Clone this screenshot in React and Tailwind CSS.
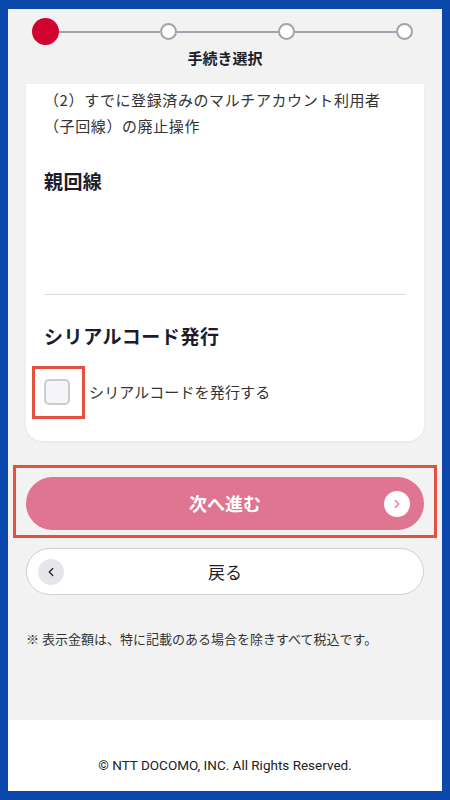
import { ChevronLeft, ChevronRight } from "lucide-react";

const jp = "font-['Noto_Sans_CJK_JP','Noto_Sans',sans-serif]";

function Steps() {
  return (
    <div className="pt-[9px]">
      <div className="ml-[24px] mr-[29px] flex items-center">
        <span className="h-[27px] w-[27px] shrink-0 rounded-full bg-[#d0022f]" />
        <span className="h-[2px] flex-1 bg-[#a3a3ad]" />
        <span className="h-[17px] w-[17px] shrink-0 rounded-full border-2 border-[#a3a3ad] bg-white" />
        <span className="h-[2px] flex-1 bg-[#a3a3ad]" />
        <span className="h-[17px] w-[17px] shrink-0 rounded-full border-2 border-[#a3a3ad] bg-white" />
        <span className="h-[2px] flex-1 bg-[#a3a3ad]" />
        <span className="h-[17px] w-[17px] shrink-0 rounded-full border-2 border-[#a3a3ad] bg-white" />
      </div>
      <p className="mt-[3px] text-center text-[15px] font-bold leading-[20px] text-[#1c1c2b]">手続き選択</p>
    </div>
  );
}

export default function App() {
  return (
    <div className={`h-[800px] overflow-hidden bg-[#0a48ac] px-[8px] pt-[9px] ${jp}`}>
      <div className="flex h-[782px] flex-col bg-[#f2f2f2]">
        <Steps />

        <main className="flex-1 px-[18px] pt-[16px]">
          <section className="rounded-b-[16px] bg-white px-[18px] pb-[22px] pt-[3px] shadow-[0_1px_3px_rgba(0,0,0,0.06)]">
            <p className="text-[15px] leading-[26px] tracking-[0.04em] text-[#333]">
              （2）すでに登録済みのマルチアカウント利用者
              <br />
              （子回線）の廃止操作
            </p>

            <h2 className="mt-[28px] text-[19px] font-bold leading-[28px] tracking-[0.02em] text-[#1c1c2b]">親回線</h2>

            <div className="mt-[99px] h-px bg-[#dcdcdc]" />

            <h2 className="mt-[27px] text-[19px] font-bold leading-[28px] tracking-[0.03em] text-[#1c1c2b]">シリアルコード発行</h2>

            <label className="mt-[16px] flex items-center">
              <span className="-ml-[12px] border-[3px] border-[#e4513f] pb-[11px] pl-[9px] pr-[12px] pt-[10px]">
                <span className="block h-[26px] w-[26px] rounded-[5px] border-2 border-[#cbcbd1] bg-[#f5f5f7]" />
              </span>
              <span className="ml-[4px] text-[15px] tracking-[0.01em] text-[#333]">シリアルコードを発行する</span>
            </label>
          </section>

          <div className="-mx-[13px] mt-[24px] border-[3px] border-[#e4513f] px-[10px] pb-[5px] pt-[9px]">
            <button type="button" className="relative flex h-[53px] w-full items-center justify-center rounded-full bg-[#df7591] text-[18px] font-bold text-white">
              次へ進む
              <span className="absolute right-[14px] top-1/2 flex h-[26px] w-[26px] -translate-y-1/2 items-center justify-center rounded-full bg-white text-[#df7591]">
                <ChevronRight size={14} strokeWidth={2} />
              </span>
            </button>
          </div>

          <button type="button" className="relative mt-[10px] flex h-[47px] w-full items-center justify-center rounded-full border border-[#cfcfd3] bg-white text-[17px] text-[#222]">
            <span className="absolute left-[11px] top-1/2 flex h-[26px] w-[26px] -translate-y-1/2 items-center justify-center rounded-full bg-[#e6e6ea] text-[#222]">
              <ChevronLeft size={14} strokeWidth={2.2} />
            </span>
            戻る
          </button>

          <p className="mt-[34px] text-[13px] leading-[20px] text-[#333]">※ 表示金額は、特に記載のある場合を除きすべて税込です。</p>
        </main>

        <footer className="h-[71px] bg-white pt-[35px] text-center font-['Roboto','Noto_Sans',sans-serif] text-[13.5px] leading-[20px] text-[#222]">
          © NTT DOCOMO, INC. All Rights Reserved.
        </footer>
      </div>
    </div>
  );
}
